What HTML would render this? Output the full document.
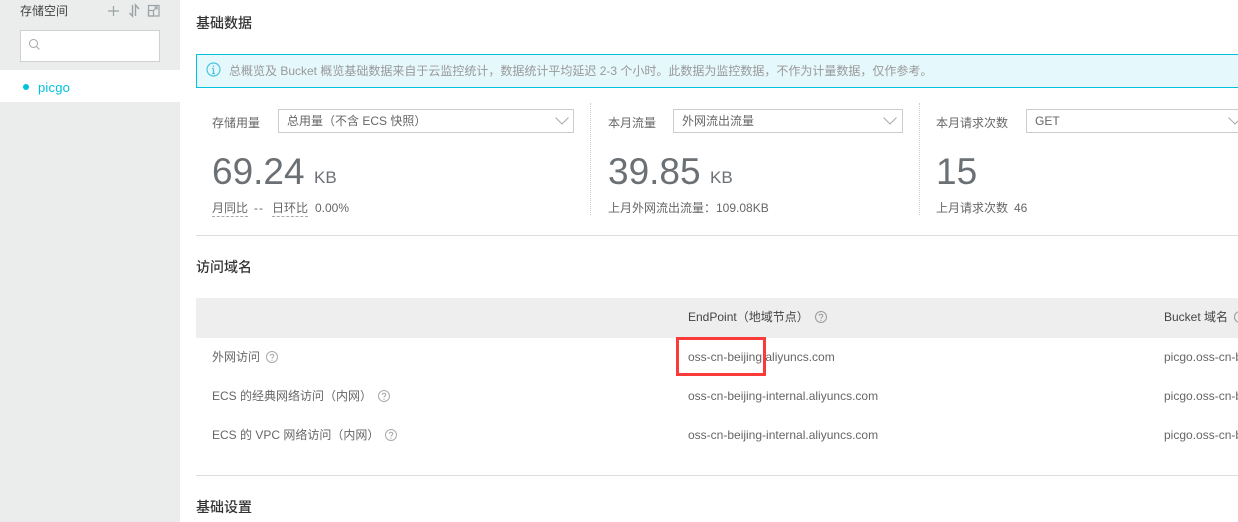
<!DOCTYPE html>
<html lang="zh">
<head>
<meta charset="utf-8">
<style>
html,body{margin:0;padding:0;width:1238px;height:522px;overflow:hidden;background:#fff}
body{position:relative;font-family:"Liberation Sans","Noto Sans CJK SC",sans-serif;font-size:12px;color:#666}
.a{position:absolute;white-space:nowrap;line-height:16px}
.clip{overflow:hidden;width:74px}
.box{position:absolute;box-sizing:border-box}
.sel{position:absolute;box-sizing:border-box;height:24px;top:109px;border:1px solid #ccc;background:#fff;line-height:22px;padding-left:8px;color:#666;white-space:nowrap;overflow:hidden}
.h{font-size:14px;font-weight:500;color:#333}
.num{position:absolute;white-space:nowrap;font-size:37px;line-height:44px;color:#6b7075;top:150px}
.kb{position:absolute;white-space:nowrap;font-size:17px;line-height:24px;color:#6b7075;top:166px}
svg{position:absolute;overflow:visible}
.dash{border-bottom:1px dashed #aaa;padding-bottom:1px}
</style>
</head>
<body>
<div class="box" style="left:0;top:0;width:180px;height:522px;background:#ebecec"></div>
<div class="a" style="left:20px;top:3px;color:#444">存储空间</div>
<svg style="left:108px;top:6px" width="11" height="10" fill="none" stroke="#9aa3a6" stroke-width="1.200"><path d="M5.500 0V10M0 5H11"/></svg>
<svg style="left:129px;top:4px" width="11" height="13" fill="none" stroke="#9aa3a6" stroke-width="1.400"><path d="M3.500 1V12L.5 9M6.500 12V1L10 5"/></svg>
<svg style="left:148px;top:5px" width="12" height="12" fill="none" stroke="#9aa3a6" stroke-width="1.200"><rect x=".5" y=".5" width="10.500" height="10.500"/><rect x=".5" y="5.500" width="5" height="5.500"/><path d="M5 6L9 2M6.500 2H9V4.500"/></svg>
<div class="box" style="left:20px;top:30px;width:140px;height:32px;background:#fff;border:1px solid #d0d0d0"></div>
<svg style="left:29px;top:39px" width="11" height="11" fill="none" stroke="#a5a5a5" stroke-width="1"><circle cx="4.500" cy="4.500" r="4"/><path d="M7.500 7.500L10.500 10.500"/></svg>
<div class="box" style="left:0;top:70px;width:180px;height:32px;background:#fff"></div>
<div class="box" style="left:23px;top:84px;width:6px;height:6px;border-radius:50%;background:#00c1de"></div>
<div class="a" style="left:38px;top:80px;color:#00c1de;font-size:13px;letter-spacing:.2px">picgo</div>

<div class="a h" style="left:196px;top:15px">基础数据</div>

<div class="box" style="left:196px;top:54px;width:1042px;height:34px;background:#e5f8fc;border:1px solid #00c1de;border-right:none"></div>
<svg style="left:206px;top:62px" width="15" height="15" fill="none" stroke="#4cc4e0" stroke-width="1.200"><circle cx="7.500" cy="7.500" r="6.500"/><path d="M7.500 3.500V5M7.500 6.500V11.500M6 6.500H7.500M6 11.500H9"/></svg>
<div class="a" style="left:229px;top:63px;color:#999;font-size:12px">总概览及 Bucket 概览基础数据来自于云监控统计，数据统计平均延迟 2-3 个小时。此数据为监控数据，不作为计量数据，仅作参考。</div>

<div class="a" style="left:212px;top:115px">存储用量</div>
<div class="sel" style="left:278px;width:296px">总用量（不含 ECS 快照）</div>
<svg style="left:555px;top:117px" width="14" height="8" fill="none" stroke="#aaa"><path d="M.5 .5L7 7L13.500 .5"/></svg>
<div class="num" style="left:212px">69.24</div>
<div class="kb" style="left:314px">KB</div>
<div class="a" style="left:212px;top:200px"><span class="dash">月同比</span></div>
<div class="a" style="left:254px;top:200px;letter-spacing:1px">--</div>
<div class="a" style="left:272px;top:200px"><span class="dash">日环比</span></div>
<div class="a" style="left:315px;top:200px">0.00%</div>

<div class="box" style="left:590px;top:103px;height:112px;border-left:1px dotted #ccc"></div>
<div class="a" style="left:608px;top:115px">本月流量</div>
<div class="sel" style="left:673px;width:230px">外网流出流量</div>
<svg style="left:883px;top:117px" width="14" height="8" fill="none" stroke="#aaa"><path d="M.5 .5L7 7L13.500 .5"/></svg>
<div class="num" style="left:608px">39.85</div>
<div class="kb" style="left:710px">KB</div>
<div class="a" style="left:608px;top:200px">上月外网流出流量：109.08KB</div>

<div class="box" style="left:919px;top:103px;height:112px;border-left:1px dotted #ccc"></div>
<div class="a" style="left:936px;top:115px">本月请求次数</div>
<div class="sel" style="left:1026px;width:212px;border-right:none">GET</div>
<svg style="left:1228px;top:117px;overflow:hidden" width="10" height="8" fill="none" stroke="#aaa"><path d="M.5 .5L7 7L13.500 .5"/></svg>
<div class="num" style="left:936px">15</div>
<div class="a" style="left:936px;top:200px">上月请求次数</div>
<div class="a" style="left:1014px;top:200px">46</div>

<div class="box" style="left:196px;top:235px;width:1042px;height:1px;background:#ddd"></div>
<div class="a h" style="left:196px;top:259px">访问域名</div>

<div class="box" style="left:196px;top:298px;width:1042px;height:40px;background:#eee"></div>
<div class="a" style="left:688px;top:309px;color:#444">EndPoint（地域节点）</div>
<svg style="left:815px;top:311px" width="12" height="12" fill="none" stroke="#999"><circle cx="6" cy="6" r="5.500"/><path d="M4.200 4.800C4.200 2.800 7.800 2.800 7.800 4.800C7.800 6.200 6 6 6 7.800M6 8.800V10"/></svg>
<div class="a" style="left:1164px;top:309px;color:#444">Bucket 域名</div>
<svg style="left:1234px;top:311px;overflow:hidden" width="4" height="12" fill="none" stroke="#999"><circle cx="6" cy="6" r="5.500"/></svg>

<div class="a" style="left:212px;top:349px">外网访问</div>
<svg style="left:266px;top:351px" width="12" height="12" fill="none" stroke="#aaa"><circle cx="6" cy="6" r="5.500"/><path d="M4.200 4.800C4.200 2.800 7.800 2.800 7.800 4.800C7.800 6.200 6 6 6 7.800M6 8.800V10"/></svg>
<div class="a" style="left:688px;top:349px">oss-cn-beijing.aliyuncs.com</div>
<div class="a clip" style="left:1164px;top:349px">picgo.oss-cn-beijing.aliyuncs.com</div>

<div class="a" style="left:212px;top:388px">ECS 的经典网络访问（内网）</div>
<svg style="left:378px;top:390px" width="12" height="12" fill="none" stroke="#aaa"><circle cx="6" cy="6" r="5.500"/><path d="M4.200 4.800C4.200 2.800 7.800 2.800 7.800 4.800C7.800 6.200 6 6 6 7.800M6 8.800V10"/></svg>
<div class="a" style="left:688px;top:388px">oss-cn-beijing-internal.aliyuncs.com</div>
<div class="a clip" style="left:1164px;top:388px">picgo.oss-cn-beijing-internal.aliyuncs.com</div>

<div class="a" style="left:212px;top:427px">ECS 的 VPC 网络访问（内网）</div>
<svg style="left:385px;top:429px" width="12" height="12" fill="none" stroke="#aaa"><circle cx="6" cy="6" r="5.500"/><path d="M4.200 4.800C4.200 2.800 7.800 2.800 7.800 4.800C7.800 6.200 6 6 6 7.800M6 8.800V10"/></svg>
<div class="a" style="left:688px;top:427px">oss-cn-beijing-internal.aliyuncs.com</div>
<div class="a clip" style="left:1164px;top:427px">picgo.oss-cn-beijing-internal.aliyuncs.com</div>

<div class="box" style="left:676px;top:337px;width:90px;height:39px;border:3px solid #fb3a3a"></div>

<div class="box" style="left:196px;top:475px;width:1042px;height:1px;background:#ddd"></div>
<div class="a h" style="left:196px;top:499px">基础设置</div>
</body>
</html>
